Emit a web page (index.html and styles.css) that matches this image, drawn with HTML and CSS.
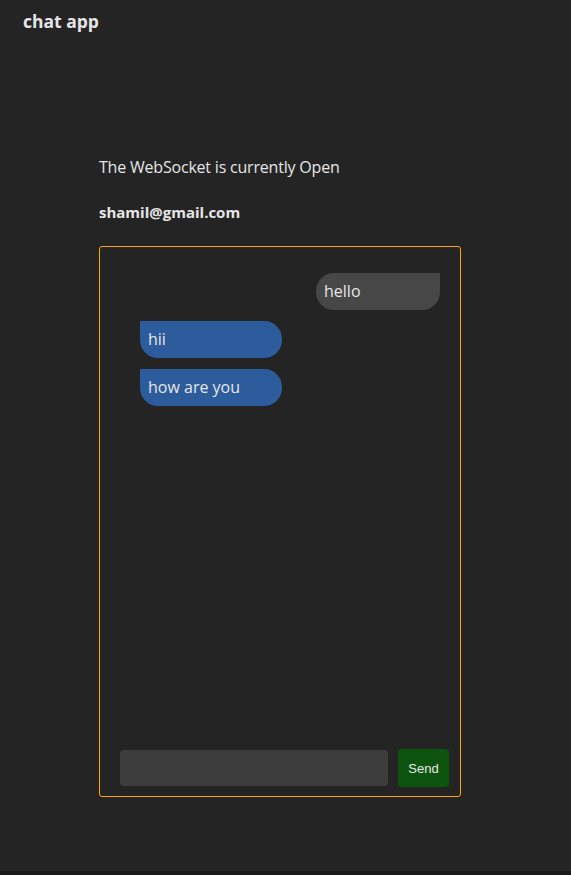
FILE: index.html
```html
<!DOCTYPE html>
<html lang="en">
<head>
<meta charset="utf-8">
<title>chat app</title>
<link rel="stylesheet" href="styles.css">
</head>
<body>
<div class="page">
  <header class="nav"><span class="brand">chat app</span></header>
  <main class="main">
    <p class="status">The WebSocket is currently Open</p>
    <p class="user">shamil@gmail.com</p>
    <section class="chat">
      <div class="messages">
        <div class="msg sent">hello</div>
        <div class="msg recv">hii</div>
        <div class="msg recv">how are you</div>
      </div>
      <form class="composer">
        <input class="field" type="text">
        <button class="send" type="button">Send</button>
      </form>
    </section>
  </main>
</div>
</body>
</html>
```
FILE: styles.css
```css
html { background: #1a1a1a; }
body {
  margin: 0;
  font-family: "Open Sans", "DejaVu Sans", sans-serif;
  color: #e6e6e6;
}
.page {
  background: #242424;
  height: 871px;
  box-sizing: border-box;
}
.nav {
  padding: 9px 23px 0;
  height: 30px;
}
.brand {
  font-weight: 700;
  font-size: 17.5px;
  line-height: 24px;
}
.main {
  width: 362px;
  margin: 116px 0 0 99px;
}
.status {
  margin: 0;
  font-size: 16px;
  letter-spacing: -0.2px;
  line-height: 24px;
}
.user {
  margin: 21px 0 0;
  font-size: 15px;
  font-weight: 700;
  line-height: 24px;
}
.chat {
  margin-top: 22px;
  height: 551px;
  box-sizing: border-box;
  border: 1px solid #ffa500;
  border-radius: 3px;
  display: flex;
  flex-direction: column;
}
.messages {
  flex: 1;
  display: flex;
  flex-direction: column;
  gap: 11px;
  padding: 26px 20px 0 40px;
}
.msg {
  height: 37px;
  box-sizing: border-box;
  padding: 0 8px;
  font-size: 16px;
  line-height: 37px;
}
.sent {
  align-self: flex-end;
  width: 124px;
  background: #474747;
  border-radius: 18px 0 18px 18px;
}
.recv {
  align-self: flex-start;
  width: 142px;
  background: #2c5c9c;
  border-radius: 0 18px 18px 18px;
}
.composer {
  display: flex;
  align-items: center;
  gap: 10px;
  padding: 0 11px 9px 20px;
}
.field {
  flex: 1;
  height: 36px;
  box-sizing: border-box;
  border: none;
  border-radius: 4px;
  background: #3c3c3c;
  color: #e6e6e6;
}
.send {
  width: 51px;
  height: 38px;
  border: none;
  border-radius: 4px;
  background: #0d540f;
  color: #e8e8e8;
  font-family: "Liberation Sans", Arial, sans-serif;
  font-size: 13px;
  padding: 0;
}
```
